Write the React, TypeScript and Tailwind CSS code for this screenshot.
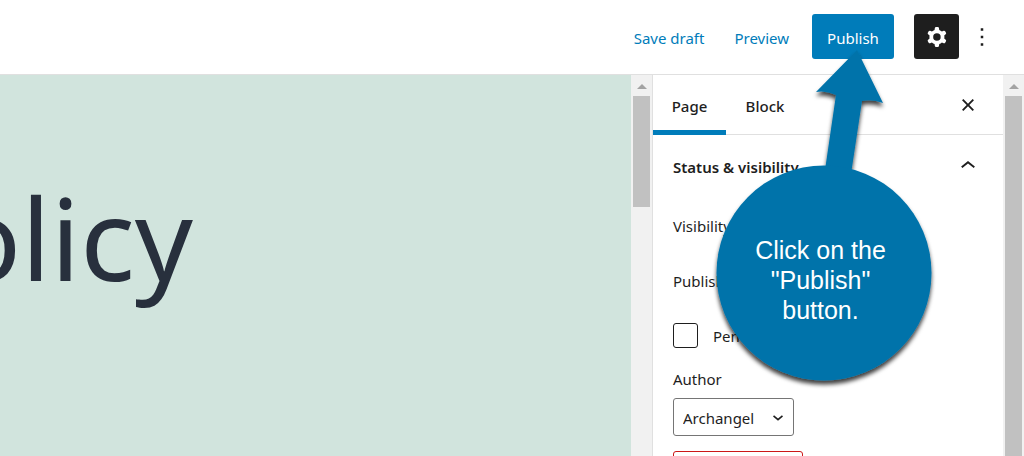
import type { ReactNode } from "react";

function Icon({ d, className = "" }: { d: string; className?: string }) {
  return (
    <svg viewBox="0 0 24 24" className={`size-[30px] shrink-0 ${className}`} fill="currentColor" aria-hidden="true">
      <path fillRule="evenodd" clipRule="evenodd" d={d} />
    </svg>
  );
}

const COG =
  "M10.289 4.836A1 1 0 0111.275 4h1.306a1 1 0 01.987.836l.244 1.466c.787.26 1.503.679 2.108 1.218l1.393-.522a1 1 0 011.216.437l.653 1.13a1 1 0 01-.23 1.273l-1.148.944a6.025 6.025 0 010 2.435l1.149.946a1 1 0 01.23 1.272l-.653 1.13a1 1 0 01-1.216.437l-1.394-.522c-.605.54-1.32.958-2.108 1.218l-.244 1.466a1 1 0 01-.987.836h-1.306a1 1 0 01-.986-.836l-.244-1.466a5.995 5.995 0 01-2.108-1.218l-1.394.522a1 1 0 01-1.217-.436l-.653-1.131a1 1 0 01.23-1.272l1.149-.946a6.026 6.026 0 010-2.435l-1.148-.944a1 1 0 01-.23-1.272l.653-1.131a1 1 0 011.217-.437l1.393.522a5.994 5.994 0 012.108-1.218l.244-1.466zM14.929 12a3 3 0 11-6 0 3 3 0 016 0z";
const MORE = "M13 19h-2v-2h2v2zm0-6h-2v-2h2v2zm0-6h-2V5h2v2z";
const CLOSE =
  "M12 13.06l3.712 3.713 1.061-1.06L13.061 12l3.712-3.712-1.06-1.06L12 10.938 8.288 7.227l-1.061 1.06L10.939 12l-3.712 3.712 1.06 1.061L12 13.061z";
const CHEVRON_UP = "M6.5 12.4L12 8l5.5 4.4-.9 1.2L12 10l-4.5 3.6-1-1.2z";

function Scrollbar({ children }: { children: ReactNode }) {
  return (
    <div className="flex w-[21px] shrink-0 flex-col items-center bg-[#f1f1f1]" aria-hidden="true">
      <div className="flex h-[21px] shrink-0 items-center">
        <svg viewBox="0 0 10 5" className="mt-0.5 h-[5px] w-[10px]" fill="#a3a3a3">
          <path d="M0 5 5 0l5 5z" />
        </svg>
      </div>
      {children}
    </div>
  );
}

function Callout() {
  return (
    <div className="pointer-events-none absolute top-[34px] -left-[112px] z-10 h-[350px] w-[250px]">
      <svg viewBox="0 0 250 350" className="size-full overflow-visible" aria-hidden="true">
        <defs>
          <filter id="callout-shadow" x="-10%" y="-10%" width="120%" height="120%">
            <feDropShadow dx="0" dy="4" stdDeviation="2" floodColor="#000" floodOpacity="0.75" />
          </filter>
        </defs>
        <g fill="#0073aa" filter="url(#callout-shadow)">
          <path d="M157 2 L183 55 Q173 51 162 53 L151 126 L125 122 L136 47 Q126 42 116 44 Z" />
          <circle cx="124" cy="225" r="107.5" />
        </g>
      </svg>
      <p className="absolute top-[187px] left-0 w-[241px] text-center font-['Liberation_Sans',Arial,sans-serif] text-[25px] leading-[30px] text-white">
        Click on the
        <br />
        "Publish"
        <br />
        button.
      </p>
    </div>
  );
}

export default function App() {
  return (
    <div className="flex h-screen flex-col overflow-hidden bg-white font-['Noto_Sans','Open_Sans',sans-serif] text-[15px] leading-5 text-[#1e1e1e]">
      <header className="flex h-[75px] shrink-0 items-center justify-end border-b border-[#e0e0e0] pr-[27px] pb-px">
        <button type="button" className="h-[45px] px-[15px] pt-0.5 text-[#007cba]">
          Save draft
        </button>
        <button type="button" className="h-[45px] px-[15px] pt-0.5 text-[#007cba]">
          Preview
        </button>
        <div className="relative ml-2">
          <button type="button" className="h-[45px] w-[82px] rounded-[3px] bg-[#007cba] pt-0.5 text-white">
            Publish
          </button>
          <Callout />
        </div>
        <button
          type="button"
          aria-label="Settings"
          className="ml-5 flex size-[45px] items-center justify-center rounded-[3px] bg-[#1e1e1e] text-white"
        >
          <Icon d={COG} />
        </button>
        <button type="button" aria-label="Options" className="ml-2">
          <Icon d={MORE} />
        </button>
      </header>

      <div className="flex min-h-0 flex-1">
        <main className="min-w-0 flex-1 overflow-hidden bg-[#d1e4dd] pt-[84px]">
          <h1 className="flex w-[193px] justify-end text-[114px] leading-[156px] text-[#28303d]">Policy</h1>
        </main>
        <Scrollbar>
          <div className="h-[111px] w-[17px] bg-[#c1c1c1]" />
        </Scrollbar>

        <aside className="w-[351px] shrink-0 overflow-hidden border-l border-[#e0e0e0]">
          <div className="flex h-[60px] items-stretch border-b border-[#e0e0e0]">
            <div role="tablist" className="-mb-px flex font-medium">
              <button
                type="button"
                role="tab"
                aria-selected="true"
                className="w-[73px] border-b-[5px] border-[#007cba] pt-1.5"
              >
                Page
              </button>
              <button type="button" role="tab" aria-selected="false" className="w-[78px] border-b-[5px] border-transparent pt-1.5">
                Block
              </button>
            </div>
            <button type="button" aria-label="Close settings" className="mr-5 ml-auto">
              <Icon d={CLOSE} />
            </button>
          </div>

          <section className="px-5">
            <h2>
              <button type="button" aria-expanded="true" className="flex h-[63px] w-full items-center justify-between font-semibold">
                Status &amp; visibility
                <Icon d={CHEVRON_UP} className="mb-0.5" />
              </button>
            </h2>
            <div className="flex h-[55px] items-center">Visibility</div>
            <div className="flex h-[55px] items-center">Publish</div>
            <label className="flex h-[55px] items-center gap-[15px]">
              <input type="checkbox" className="size-[25px] appearance-none rounded-[3px] border border-[#1e1e1e] bg-white" />
              Pending review
            </label>
            <label htmlFor="author" className="mt-[6px] block">
              Author
            </label>
            <div className="relative mt-[9px] w-[121px]">
              <select
                id="author"
                className="block h-[38px] w-full appearance-none rounded-[3px] border border-[#757575] bg-white pt-0.5 pl-[9px] text-[#1e1e1e]"
              >
                <option>Archangel</option>
              </select>
              <svg
                viewBox="0 0 10 6"
                className="pointer-events-none absolute top-[17px] right-[11px] h-[6px] w-[10px]"
                fill="none"
                stroke="#1e1e1e"
                strokeWidth="1.7"
                aria-hidden="true"
              >
                <path d="M0.5 0.8 5 4.6 9.5 0.8" />
              </svg>
            </div>
            <button
              type="button"
              aria-label="Move to trash"
              className="mt-[15px] block h-[45px] w-[130px] rounded-[3px] border border-[#cc1818]"
            />
          </section>
        </aside>
        <Scrollbar>
          <div className="w-[17px] flex-1 bg-[#c1c1c1]" />
        </Scrollbar>
      </div>
    </div>
  );
}
